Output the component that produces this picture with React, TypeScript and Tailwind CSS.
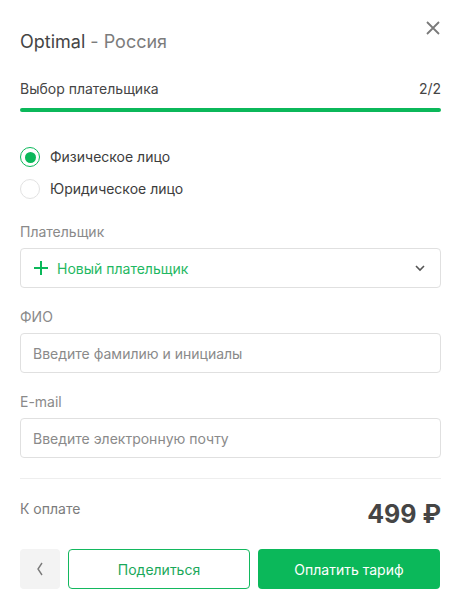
import { useState } from 'react'

const GREEN = 'bg-[#0bb85a]'

function Radio({ checked, label, onClick }: { checked: boolean; label: string; onClick: () => void }) {
  return (
    <button type="button" onClick={onClick} className="flex h-5 items-center gap-[10px] text-left">
      <span
        className={`flex h-5 w-5 shrink-0 items-center justify-center rounded-full border-[1.5px] ${
          checked ? 'border-[#0bb85a]' : 'border-[#e2e2e2]'
        }`}
      >
        {checked && <span className={`h-[11px] w-[11px] rounded-full ${GREEN}`} />}
      </span>
      <span className="text-[14px] leading-5 text-[#3d3d3d]">{label}</span>
    </button>
  )
}

function Field({ label, placeholder }: { label: string; placeholder: string }) {
  return (
    <div className="mt-[19px]">
      <p className="text-[14px] leading-5 text-[#8a8a8a]">{label}</p>
      <input
        placeholder={placeholder}
        className="mt-[6px] h-10 w-full rounded-[4px] border border-[#e0e0e0] px-3 text-[14px] text-[#333] outline-none placeholder:text-[#8a8a8a]"
      />
    </div>
  )
}

export default function App() {
  const [kind, setKind] = useState<'person' | 'company'>('person')

  return (
    <div className="relative h-[608px] w-[461px] bg-white px-5 font-['Inter','Noto_Sans',sans-serif]">
      <button type="button" className="absolute right-[21px] top-[21px] text-[#7a7a7a]" aria-label="Закрыть">
        <svg width="14" height="14" viewBox="0 0 14 14" fill="none" stroke="currentColor" strokeWidth="1.8">
          <path d="M1 1l12 12M13 1L1 13" />
        </svg>
      </button>

      <h1 className="pt-[30px] text-[18px] leading-6 text-[#454545]">
        Optimal <span className="text-[#7c7c7c]">- Россия</span>
      </h1>

      <div className="mt-[25px] flex items-center justify-between text-[14px] leading-5 text-[#454545]">
        <span>Выбор плательщика</span>
        <span>2/2</span>
      </div>
      <div className={`mt-[9px] h-[4px] w-full rounded-full ${GREEN}`} />

      <div className="mt-[35px] flex flex-col gap-3">
        <Radio checked={kind === 'person'} label="Физическое лицо" onClick={() => setKind('person')} />
        <Radio checked={kind === 'company'} label="Юридическое лицо" onClick={() => setKind('company')} />
      </div>

      <p className="mt-[23px] text-[14px] leading-5 text-[#8a8a8a]">Плательщик</p>
      <div className="mt-[6px] flex h-10 items-center rounded-[4px] border border-[#e0e0e0] pl-3 pr-[14px]">
        <svg width="16" height="16" viewBox="0 0 16 16" fill="none" stroke="#0bb85a" strokeWidth="2">
          <path d="M8 1v14M1 8h14" />
        </svg>
        <span className="ml-2 flex-1 text-[14px] text-[#1fb862]">Новый плательщик</span>
        <svg width="12" height="8" viewBox="0 0 12 8" fill="none" stroke="#555" strokeWidth="1.6">
          <path d="M2 2l4 4 4-4" />
        </svg>
      </div>

      <Field label="ФИО" placeholder="Введите фамилию и инициалы" />
      <Field label="E-mail" placeholder="Введите электронную почту" />

      <div className="mt-5 h-px bg-[#eeeeee]" />

      <div className="mt-[19px] flex items-start justify-between">
        <span className="pt-[1px] text-[14px] leading-5 text-[#7c7c7c]">К оплате</span>
        <span className="text-[25px] font-bold leading-8 text-[#454545]">499 ₽</span>
      </div>

      <div className="mt-[19px] flex h-10 gap-2">
        <button type="button" className="flex w-10 shrink-0 items-center justify-center rounded-[4px] bg-[#f3f3f3] text-[#7a7a7a]">
          <svg width="8" height="16" viewBox="0 0 8 16" fill="none" stroke="currentColor" strokeWidth="1.4">
            <path d="M6 2L2 8l4 6" />
          </svg>
        </button>
        <button
          type="button"
          className="w-[182px] rounded-[4px] border border-[#13b85e] text-[14px] text-[#1aa85a]"
        >
          Поделиться
        </button>
        <button type="button" className={`w-[182px] rounded-[4px] ${GREEN} text-[14px] text-white`}>
          Оплатить тариф
        </button>
      </div>
    </div>
  )
}
